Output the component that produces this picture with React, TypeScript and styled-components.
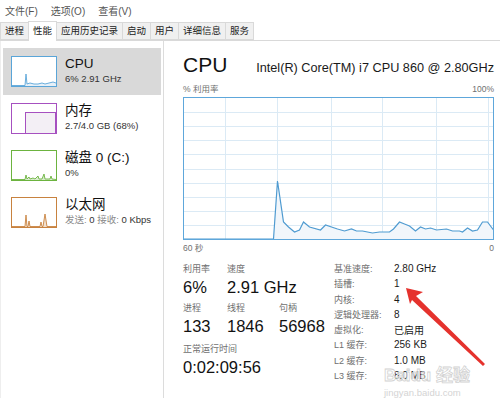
import styled, { createGlobalStyle } from 'styled-components'

const GlobalStyle = createGlobalStyle`
  html, body {
    margin: 0;
    padding: 0;
    background: #fff;
  }
  body {
    font-family: "Liberation Sans", "Noto Sans CJK SC", sans-serif;
    color: #1a1a1a;
  }
`

const Window = styled.div`
  position: relative;
  width: 500px;
  height: 413px;
  overflow: hidden;
  background: #fff;
  display: flex;
  flex-direction: column;
`

const MenuBar = styled.div`
  display: flex;
  gap: 13px;
  height: 21px;
  padding: 2px 0 0 5px;
  box-sizing: border-box;
  font-size: 10px;
  line-height: 19px;
  color: #555;
`

const TabBar = styled.div`
  display: flex;
  height: 20px;
  padding-left: 1px;
  border-bottom: 1px solid #d9d9d9;
  box-sizing: border-box;
`

const Tab = styled.div<{ $active?: boolean }>`
  height: ${(p) => (p.$active ? '20px' : '18px')};
  margin-top: ${(p) => (p.$active ? '0' : '1px')};
  padding: 0 4px;
  box-sizing: border-box;
  font-size: 9.5px;
  line-height: ${(p) => (p.$active ? '18px' : '16px')};
  color: #222;
  background: ${(p) => (p.$active ? '#fff' : '#f0f0f0')};
  border: 1px solid #d9d9d9;
  border-bottom: ${(p) => (p.$active ? 'none' : '1px solid #d9d9d9')};
  margin-left: -1px;
  position: relative;
  z-index: ${(p) => (p.$active ? 1 : 0)};
`

const Body = styled.div`
  display: flex;
  flex: 1;
`

const LeftPane = styled.div`
  width: 164px;
  height: 357px;
  box-sizing: border-box;
  padding-top: 7px;
  border-left: 1px solid #eeeeee;
  border-right: 1px solid #dcdcdc;
  display: flex;
  flex-direction: column;
`

const Item = styled.div<{ $selected?: boolean }>`
  display: flex;
  gap: 8px;
  height: 47px;
  margin: 0 2px;
  padding: 8px 0 0 8px;
  box-sizing: border-box;
  background: ${(p) => (p.$selected ? '#d9d9d9' : 'transparent')};
`

const Thumb = styled.div<{ $color: string }>`
  width: 46px;
  height: 31px;
  box-sizing: border-box;
  border: 1px solid ${(p) => p.$color};
  background: #fff;
  flex-shrink: 0;
  svg {
    display: block;
  }
`

const ItemText = styled.div`
  display: flex;
  flex-direction: column;
`

const ItemTitle = styled.div`
  font-size: 13.5px;
  line-height: 16px;
  color: #111;
`

const ItemSub = styled.div`
  font-size: 9.5px;
  line-height: 13px;
  color: #333;
`

const Muted = styled.span`
  color: #8a8a8a;
`

const RightPane = styled.div`
  display: flex;
  flex-direction: column;
  width: 311px;
  margin-left: 19px;
  padding-top: 12px;
`

const Header = styled.div`
  display: flex;
  justify-content: space-between;
  align-items: baseline;
`

const BigTitle = styled.div`
  font-size: 21px;
  line-height: 24px;
  color: #111;
`

const Model = styled.div`
  font-size: 12.7px;
  color: #1a1a1a;
`

const AxisRow = styled.div<{ $top: number }>`
  display: flex;
  justify-content: space-between;
  margin-top: ${(p) => p.$top}px;
  font-size: 8.5px;
  line-height: 12px;
  color: #707070;
`

const Graph = styled.div`
  width: 311px;
  height: 143px;
  margin-top: 2px;
  svg {
    display: block;
  }
`

const Stats = styled.div`
  display: grid;
  grid-template-columns: 151px auto;
  margin-top: 7px;
`

const StatsColumn = styled.div`
  display: flex;
  flex-direction: column;
  padding-top: 2px;
`

const StatRow = styled.div<{ $gap: number }>`
  display: flex;
  margin-bottom: ${(p) => p.$gap}px;
`

const Stat = styled.div<{ $width?: number }>`
  display: flex;
  flex-direction: column;
  gap: 2px;
  width: ${(p) => (p.$width ? `${p.$width}px` : 'auto')};
`

const StatLabel = styled.div`
  font-size: 9px;
  line-height: 12px;
  color: #707070;
`

const StatValue = styled.div`
  font-size: 16.5px;
  line-height: 20px;
  color: #111;
`

const Specs = styled.div`
  display: grid;
  grid-template-columns: 60px auto;
  grid-auto-rows: 15.25px;
  align-items: center;
`

const SpecLabel = styled.div`
  font-size: 9px;
  color: #707070;
`

const SpecValue = styled.div`
  font-size: 10px;
  color: #1a1a1a;
`

const Overlay = styled.svg`
  position: absolute;
  top: 0;
  left: 0;
  pointer-events: none;
`

const Watermark = styled.div`
  position: absolute;
  left: 384px;
  top: 366px;
  display: flex;
  flex-direction: column;
  color: rgba(255, 255, 255, 0.6);
  pointer-events: none;
`

const WatermarkLogo = styled.div`
  font-size: 17px;
  font-weight: bold;
  line-height: 20px;
  -webkit-text-stroke: 0.8px #d2d2d2;
`

const WatermarkUrl = styled.div`
  font-size: 9.5px;
  line-height: 14px;
  color: #d4d4d4;
`

const cpuPoints: [number, number][] = [
  [0, 142], [90, 142], [94, 84], [100, 125], [105, 130], [111, 135], [116, 133],
  [120, 125], [126, 130], [137, 133], [142, 128], [148, 130], [154, 132], [161, 134],
  [168, 132], [173, 134], [179, 134], [189, 136], [196, 135], [206, 135], [210, 132],
  [216, 125], [221, 127], [226, 129], [232, 134], [237, 130], [242, 132], [247, 131],
  [253, 133], [263, 132], [269, 134], [276, 134], [279, 135], [284, 131], [289, 134],
  [294, 133], [299, 125], [304, 125], [310, 133],
]

function CpuGraph() {
  const w = 311
  const h = 143
  const line = cpuPoints.map(([x, y]) => `${x + 0.5},${y}`).join(' ')
  const vLines = [42, 94, 148, 199, 253, 305]
  const hLines = Array.from({ length: 9 }, (_, i) => 0.5 + ((i + 1) * 142) / 10)
  return (
    <svg width={w} height={h}>
      {vLines.map((x) => (
        <line key={x} x1={x + 0.5} y1={0} x2={x + 0.5} y2={h} stroke="#dbeaf5" />
      ))}
      {hLines.map((y) => (
        <line key={y} x1={0} y1={Math.round(y) + 0.5} x2={w} y2={Math.round(y) + 0.5} stroke="#dbeaf5" />
      ))}
      <polygon points={`0.5,142 ${line} 310.5,142`} fill="#f1f6fb" />
      <polyline points={line} fill="none" stroke="#4f9bd1" strokeWidth={1.2} />
      <rect x={0.5} y={0.5} width={w - 1} height={h - 1} fill="none" stroke="#5ea7db" />
    </svg>
  )
}

function CpuThumb() {
  return (
    <svg width={44} height={29}>
      <polygon
        points="0,29 13,29 14,17 15,27 18,26 22,27 26,27 30,26 33,27 37,26 41,25 44,26 44,29"
        fill="#e6f0f8"
      />
      <polyline
        points="0,28.5 13,28.5 14,17 15,27 18,26 22,27 26,27 30,26 33,27 37,26 41,25 44,26"
        fill="none"
        stroke="#5aa5d8"
        strokeWidth={0.9}
      />
    </svg>
  )
}

function MemThumb() {
  return (
    <svg width={44} height={29}>
      <rect x={13.5} y={8.5} width={30} height={21} fill="#f3eff5" stroke="#a650c0" />
    </svg>
  )
}

function SpikeThumb({ color, points }: { color: string; points: string }) {
  return (
    <svg width={44} height={29}>
      <polygon points={`0,29 ${points} 44,29`} fill={color} fillOpacity={0.25} />
      <polyline points={points} fill="none" stroke={color} strokeWidth={0.9} />
    </svg>
  )
}

export default function App() {
  const tabs = ['进程', '性能', '应用历史记录', '启动', '用户', '详细信息', '服务']
  const specs: [string, string][] = [
    ['基准速度:', '2.80 GHz'],
    ['插槽:', '1'],
    ['内核:', '4'],
    ['逻辑处理器:', '8'],
    ['虚拟化:', '已启用'],
    ['L1 缓存:', '256 KB'],
    ['L2 缓存:', '1.0 MB'],
    ['L3 缓存:', '8.0 MB'],
  ]

  return (
    <Window>
      <GlobalStyle />
      <MenuBar>
        <span>文件(F)</span>
        <span>选项(O)</span>
        <span>查看(V)</span>
      </MenuBar>
      <TabBar>
        {tabs.map((t) => (
          <Tab key={t} $active={t === '性能'}>
            {t}
          </Tab>
        ))}
      </TabBar>
      <Body>
        <LeftPane>
          <Item $selected>
            <Thumb $color="#5aa5d8">
              <CpuThumb />
            </Thumb>
            <ItemText>
              <ItemTitle>CPU</ItemTitle>
              <ItemSub>6% 2.91 GHz</ItemSub>
            </ItemText>
          </Item>
          <Item>
            <Thumb $color="#a650c0">
              <MemThumb />
            </Thumb>
            <ItemText>
              <ItemTitle>内存</ItemTitle>
              <ItemSub>2.7/4.0 GB (68%)</ItemSub>
            </ItemText>
          </Item>
          <Item>
            <Thumb $color="#6cb33f">
              <SpikeThumb
                color="#6cb33f"
                points="0,28.5 13,28.5 14,24 15,28 17,26 18,28 21,27 23,28 26,25 27,28 30,28 32,23 33,28 38,28 39,25 40,28 44,28.5"
              />
            </Thumb>
            <ItemText>
              <ItemTitle>磁盘 0 (C:)</ItemTitle>
              <ItemSub>0%</ItemSub>
            </ItemText>
          </Item>
          <Item>
            <Thumb $color="#c8823f">
              <SpikeThumb
                color="#c8823f"
                points="0,28.5 13,28.5 14,17 15,28.5 16,28.5 17,23 18,28.5 28,28.5 29,24 30,28.5 31,28.5 33,16 35,28.5 44,28.5"
              />
            </Thumb>
            <ItemText>
              <ItemTitle>以太网</ItemTitle>
              <ItemSub>
                <Muted>发送:</Muted> 0 <Muted>接收:</Muted> 0 Kbps
              </ItemSub>
            </ItemText>
          </Item>
        </LeftPane>
        <RightPane>
          <Header>
            <BigTitle>CPU</BigTitle>
            <Model>Intel(R) Core(TM) i7 CPU 860 @ 2.80GHz</Model>
          </Header>
          <AxisRow $top={6}>
            <span>% 利用率</span>
            <span>100%</span>
          </AxisRow>
          <Graph>
            <CpuGraph />
          </Graph>
          <AxisRow $top={2}>
            <span>60 秒</span>
            <span>0</span>
          </AxisRow>
          <Stats>
            <StatsColumn>
              <StatRow $gap={5}>
                <Stat $width={44}>
                  <StatLabel>利用率</StatLabel>
                  <StatValue>6%</StatValue>
                </Stat>
                <Stat>
                  <StatLabel>速度</StatLabel>
                  <StatValue>2.91 GHz</StatValue>
                </Stat>
              </StatRow>
              <StatRow $gap={7}>
                <Stat $width={44}>
                  <StatLabel>进程</StatLabel>
                  <StatValue>133</StatValue>
                </Stat>
                <Stat $width={52}>
                  <StatLabel>线程</StatLabel>
                  <StatValue>1846</StatValue>
                </Stat>
                <Stat>
                  <StatLabel>句柄</StatLabel>
                  <StatValue>56968</StatValue>
                </Stat>
              </StatRow>
              <StatRow $gap={0}>
                <Stat>
                  <StatLabel>正常运行时间</StatLabel>
                  <StatValue>0:02:09:56</StatValue>
                </Stat>
              </StatRow>
            </StatsColumn>
            <Specs>
              {specs.map(([k, v]) => (
                <>
                  <SpecLabel key={k}>{k}</SpecLabel>
                  <SpecValue key={k + 'v'}>{v}</SpecValue>
                </>
              ))}
            </Specs>
          </Stats>
        </RightPane>
      </Body>
      <Watermark>
        <WatermarkLogo>Baidu 经验</WatermarkLogo>
        <WatermarkUrl>jingyan.baidu.com</WatermarkUrl>
      </Watermark>
      <Overlay width={500} height={413}>
        <polygon points="406,288 423,292 416,296 485,364 483,366 412,300 410,304" fill="#e5322d" />
      </Overlay>
    </Window>
  )
}
